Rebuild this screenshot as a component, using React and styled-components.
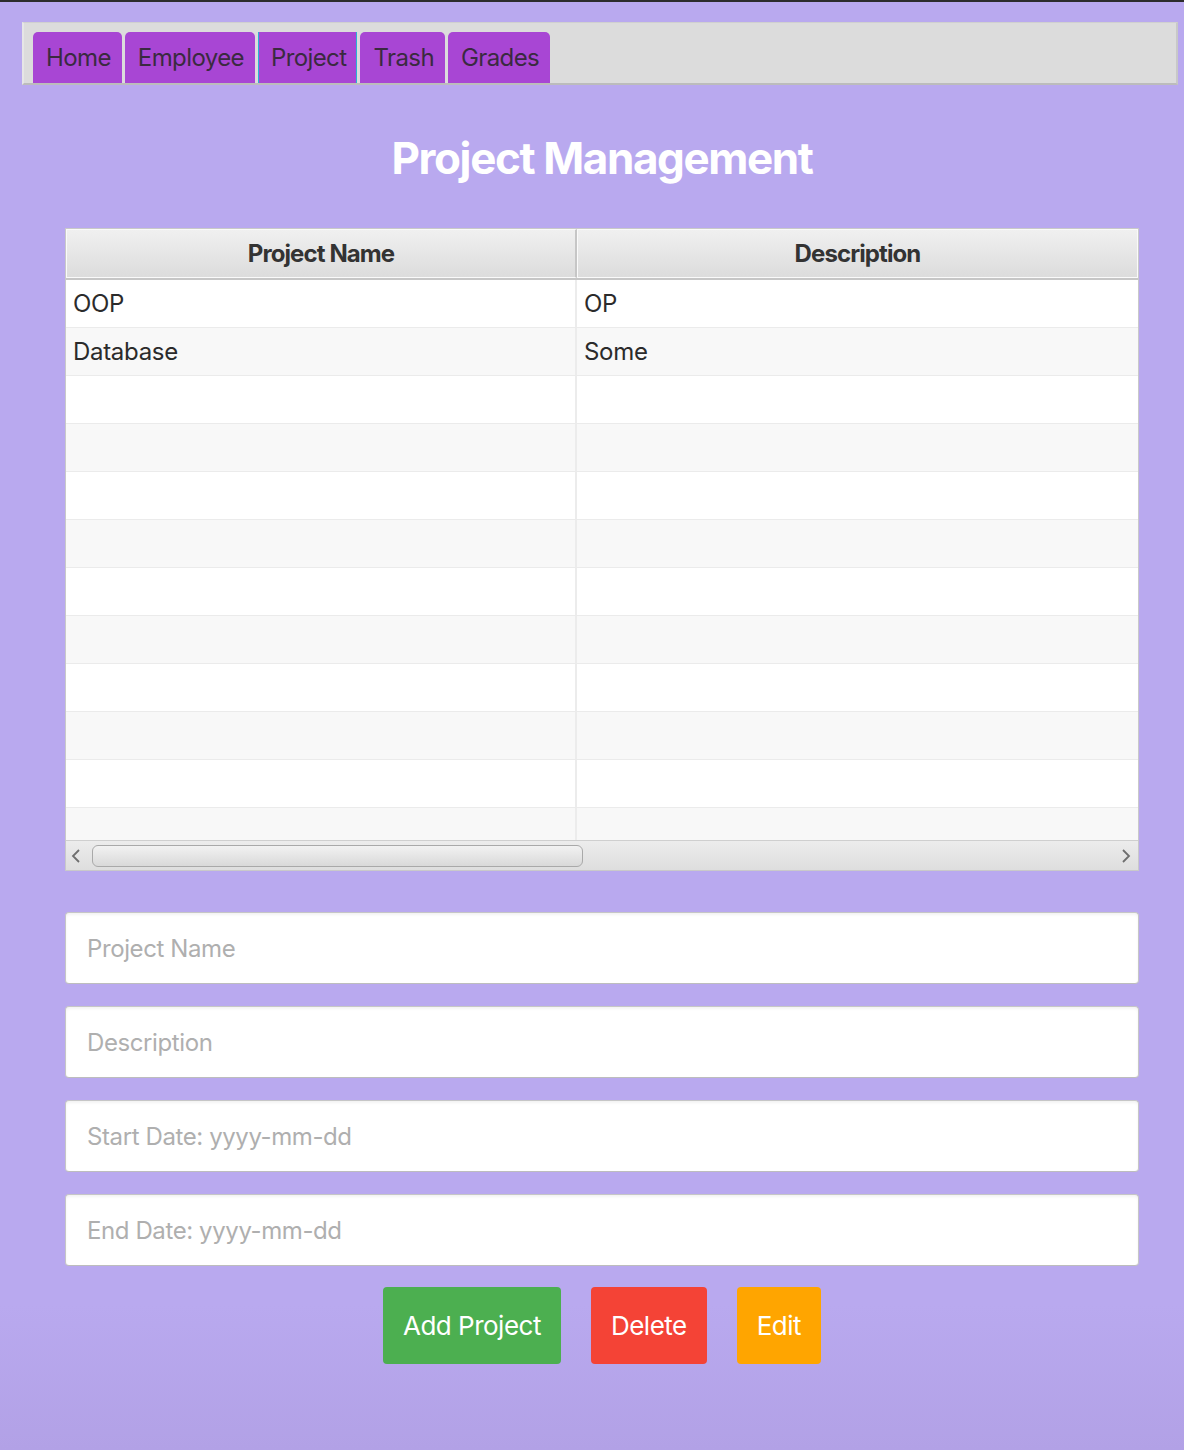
import React from "react";
import styled, { createGlobalStyle } from "styled-components";

const GlobalStyle = createGlobalStyle`
  body {
    margin: 0;
    background: #b9a9ef;
    font-family: Inter, "Noto Sans", "Liberation Sans", sans-serif;
  }
`;

const Window = styled.div`
  box-sizing: border-box;
  min-height: 1450px;
  border-top: 2px solid #2c2c2c;
  background: linear-gradient(to bottom, #b9a9ef 0%, #b9a9ef 90%, #b2a1e6 100%);
  padding-top: 20px;
`;

const TabBar = styled.div`
  margin: 0 6px 0 22px;
  height: 63px;
  box-sizing: border-box;
  background: #dcdcdc;
  border-top: 1px solid #d0d0d0;
  border-right: 2px solid #c8c8c8;
  border-left: 2px solid #e6e6e6;
  border-bottom: 2px solid #bcbcbc;
  display: flex;
  align-items: flex-end;
  gap: 3px;
  padding-left: 9px;
`;

const Tab = styled.div`
  height: 51px;
  box-sizing: border-box;
  padding: 0 ${(p) => (p.$active ? 10 : 11)}px 0 ${(p) => (p.$active ? 12 : 13)}px;
  display: flex;
  align-items: center;
  background: #a846d4;
  border-radius: 5px 5px 0 0;
  color: #3a2a40;
  font-size: 24px;
  letter-spacing: -0.6px;
  border-left: ${(p) => (p.$active ? "1px solid #29b3d4" : "none")};
  border-right: ${(p) => (p.$active ? "1px solid #29b3d4" : "none")};
  ${(p) => p.$active && "border-radius: 0;"}
`;

const Content = styled.div`
  padding: 0 45px 0 65px;
`;

const Title = styled.h1`
  margin: 43px 0 0;
  height: 100px;
  text-align: center;
  color: #ffffff;
  font-size: 44px;
  font-weight: 700;
  letter-spacing: -1.4px;
  line-height: 60px;
`;

const Table = styled.div`
  border: 1px solid #c9c9c9;
  background: #ffffff;
`;

const HeaderRow = styled.div`
  display: grid;
  grid-template-columns: 511px 1fr;
  height: 49px;
  border-bottom: 2px solid #c6c6c6;
`;

const HeaderCell = styled.div`
  display: flex;
  align-items: center;
  justify-content: center;
  background: linear-gradient(to bottom, #f0f0f0, #dcdcdc);
  border: 1px solid #fafafa;
  border-right: 2px solid #c6c6c6;
  font-size: 24px;
  font-weight: 700;
  color: #333333;
  letter-spacing: -0.9px;
  &:last-child {
    border-right: 1px solid #fafafa;
  }
`;

const Body = styled.div`
  height: 560px;
  overflow: hidden;
`;

const Row = styled.div`
  display: grid;
  grid-template-columns: 511px 1fr;
  height: 48px;
  box-sizing: border-box;
  border-bottom: 1px solid #ebebeb;
  background: ${(p) => (p.$odd ? "#f8f8f8" : "#ffffff")};
`;

const Cell = styled.div`
  display: flex;
  align-items: center;
  padding-left: 7px;
  font-size: 24px;
  letter-spacing: -0.3px;
  color: #2b2b2b;
  border-right: 2px solid #ececec;
  &:last-child {
    border-right: none;
  }
`;

const ScrollBar = styled.div`
  height: 30px;
  box-sizing: border-box;
  border-top: 1px solid #cfcfcf;
  background: linear-gradient(to bottom, #ececec, #dedede);
  display: flex;
  align-items: center;
  padding: 0 6px 0 4px;
  gap: 10px;
`;

const Thumb = styled.div`
  width: 491px;
  height: 22px;
  box-sizing: border-box;
  border: 1px solid #a9a9a9;
  border-radius: 6px;
  background: linear-gradient(to bottom, #f2f2f2, #d9d9d9);
`;

const Spacer = styled.div`
  flex: 1;
`;

const Arrow = ({ dir }) => (
  <svg width="12" height="16" viewBox="0 0 12 16">
    <path
      d={dir === "left" ? "M9 2 L3 8 L9 14" : "M3 2 L9 8 L3 14"}
      fill="none"
      stroke="#6e6e6e"
      strokeWidth="1.8"
    />
  </svg>
);

const Form = styled.div`
  margin-top: 41px;
  display: flex;
  flex-direction: column;
  gap: 22px;
`;

const Input = styled.input`
  height: 72px;
  box-sizing: border-box;
  border: 1px solid #c6c6c6;
  border-bottom-color: #bdbdbd;
  border-radius: 4px;
  background: #ffffff;
  box-shadow: inset 0 2px 3px rgba(0, 0, 0, 0.05);
  padding: 0 21px;
  font-family: inherit;
  font-size: 24px;
  letter-spacing: -0.4px;
  color: #333333;
  outline: none;
  &::placeholder {
    color: #afafaf;
  }
`;

const Actions = styled.div`
  margin-top: 21px;
  display: flex;
  justify-content: center;
  gap: 30px;
`;

const Button = styled.button`
  height: 77px;
  padding: 0 20px;
  border: none;
  border-radius: 4px;
  background: ${(p) => p.$bg};
  color: #ffffff;
  font-family: inherit;
  font-size: 26px;
  letter-spacing: -0.5px;
`;

const rows = [
  ["OOP", "OP"],
  ["Database", "Some"],
  ...Array.from({ length: 10 }, () => ["", ""]),
];

export default function App() {
  return (
    <>
      <GlobalStyle />
      <Window>
        <TabBar>
          <Tab>Home</Tab>
          <Tab>Employee</Tab>
          <Tab $active>Project</Tab>
          <Tab>Trash</Tab>
          <Tab>Grades</Tab>
        </TabBar>

        <Content>
          <Title>Project Management</Title>

          <Table>
            <HeaderRow>
              <HeaderCell>Project Name</HeaderCell>
              <HeaderCell>Description</HeaderCell>
            </HeaderRow>
            <Body>
              {rows.map((r, i) => (
                <Row key={i} $odd={i % 2 === 1}>
                  <Cell>{r[0]}</Cell>
                  <Cell>{r[1]}</Cell>
                </Row>
              ))}
            </Body>
            <ScrollBar>
              <Arrow dir="left" />
              <Thumb />
              <Spacer />
              <Arrow dir="right" />
            </ScrollBar>
          </Table>

          <Form>
            <Input placeholder="Project Name" />
            <Input placeholder="Description" />
            <Input placeholder="Start Date: yyyy-mm-dd" />
            <Input placeholder="End Date: yyyy-mm-dd" />
          </Form>

          <Actions>
            <Button $bg="#4caf50">Add Project</Button>
            <Button $bg="#f44336">Delete</Button>
            <Button $bg="#ffa500">Edit</Button>
          </Actions>
        </Content>
      </Window>
    </>
  );
}
